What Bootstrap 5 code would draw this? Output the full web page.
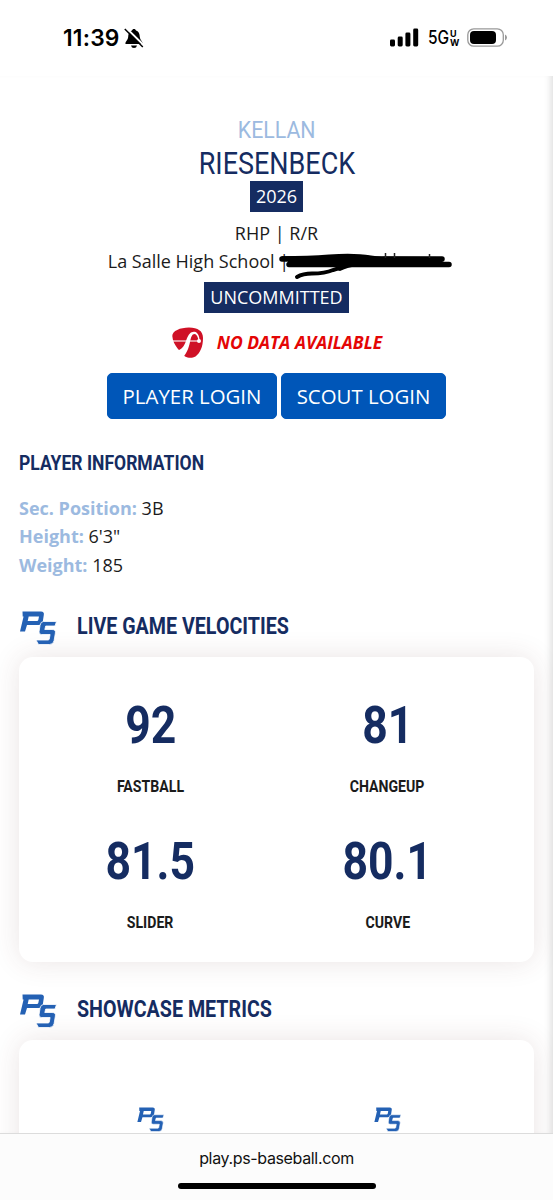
<!DOCTYPE html>
<html lang="en">
<head>
<meta charset="utf-8">
<meta name="viewport" content="width=device-width, initial-scale=1">
<title>Kellan Riesenbeck</title>
<link href="https://cdn.jsdelivr.net/npm/bootstrap@5.3.0/dist/css/bootstrap.min.css" rel="stylesheet">
<style>
  :root { --navy: #152c61; --sky: #9cbae0; }
  body { height: 1200px; overflow: hidden; background: #fff; color: #1b1b1b; font-family: "Open Sans", "Noto Sans", sans-serif; font-size: 18px; line-height: 28.4px; }
  .statusbar { height: 76px; font-family: Inter, sans-serif; color: #000; padding: 0 45px 0 63px; }
  .clock { font-size: 22.8px; font-weight: 600; line-height: 76px; letter-spacing: .2px; }
  .carrier { font-size: 18px; font-weight: 500; line-height: 20px; width: 22px; margin-left: 9px; }
  .carrier > span { display: inline-block; transform: scaleX(.86); transform-origin: 0 50%; }
  .uw { font-size: 9px; font-weight: 700; line-height: 9px; width: 10px; }
  .page { min-height: 0; padding: 38px 19px 0; box-shadow: inset -7px 0 7px -5px rgba(0,0,0,.14); }
  .cond { font-family: Roboto, sans-serif; white-space: nowrap; }
  .cond > span { display: inline-block; transform: scaleX(.87); }
  .cond.left > span { transform-origin: 0 50%; transform: scaleX(.848); }
  .cond.info > span { transform: scaleX(.835); }
  .first { font-size: 24.5px; line-height: 30px; color: var(--sky); padding-top: .5px; }
  .last { font-size: 31px; line-height: 36px; color: var(--navy); padding-top: 1.500px; margin-bottom: -1.500px; }
  .tag { background: var(--navy); color: #fff; line-height: 31px; padding: 0 6px; }
  .scribble { width: 180px; height: 36px; overflow: visible; position: absolute; left: -5px; top: 0; }
  .hiddenpart { width: 166px; position: relative; text-align: left; }
  .nodata { color: #e40505; font-size: 17.5px; font-weight: 700; font-style: italic; height: 34px; margin: 12px 0 14px; padding-left: 1px; }
  .btn-login { --bs-btn-bg: #0056b8; --bs-btn-color: #fff; --bs-btn-border-color: #0056b8; font-size: 20.4px; line-height: 30px; height: 46px; padding: 7px 0; border-radius: 5px; }
  .heading { color: var(--navy); font-weight: 700; }
  .info { font-size: 21px; line-height: 28px; margin: 30px 0 17px; }
  .title { height: 36px; margin: 31px 0 11px; }
  .title .heading { font-size: 23.200px; line-height: 30px; margin: 0 0 4px 20px; }
  .lbl { color: var(--sky); font-weight: 700; }
  .panel { border-radius: 14px; background: #fff; box-shadow: 0 0 28px rgba(90,45,45,.13); padding: 39px 28px 0 13px; }
  .velocities { height: 305px; }
  .metrics { height: 200px; padding-top: 67px; }
  .num { font-size: 52px; font-weight: 700; line-height: 60px; color: var(--navy); margin-bottom: 19px; }
  .num > span { transform: scaleX(.855); }
  .cap { font-size: 17px; font-weight: 700; line-height: 22px; margin-bottom: 35px; }
  .cap > span { transform: scaleX(.83); }
  .addressbar { height: 67px; flex: none; background: #fcfcfc; border-top: 1px solid #dcdcdc; font-family: Inter, sans-serif; font-size: 16px; letter-spacing: -.35px; color: #111; z-index: 2; padding-top: 12px; line-height: 24px; }
  .homebar { width: 198px; height: 6px; border-radius: 3px; background: #000; margin: 13px auto 0; }
</style>
<script src="https://cdn.jsdelivr.net/npm/bootstrap@5.3.0/dist/js/bootstrap.bundle.min.js"></script>
</head>
<body class="d-flex flex-column">
<svg width="0" height="0" class="position-absolute"><symbol id="ps" viewBox="0 0 37 34">
  <path fill="#2461b4" d="M3 .5H21.500Q25 .5 24.300 4L23.300 10.500Q22.500 14 19 14H7.500L5.500 20.500H.5L4.200 5H9.300L8.200 10H17.500Q18.600 10 18.800 9L19.500 5.500H3.200Z"/>
  <path fill="#2461b4" stroke="#fff" stroke-width=".8" d="M24 10.500H37L35.500 15H26.200L25.300 18.500H32.500Q36.500 18.500 35.900 22L34.600 29.500Q34 33.500 30 33.500H19L16.500 29H28.500Q29.600 29 29.800 28L30.600 23.500H22Q19 23.500 19.600 20.500L20.500 14.500Q21 10.500 24 10.500Z"/>
</symbol></svg>
<header class="statusbar d-flex align-items-center justify-content-between flex-shrink-0">
  <div class="d-flex align-items-center gap-1"><span class="clock">11:39</span>
    <svg width="20" height="21" viewBox="0 0 20 21"><path d="M10 1C9 1 8.200 1.600 8 2.500C5 3.500 4.400 6 4.200 9C4 12 1.500 13.500 1.300 15.300Q1.300 16 2 16H18Q18.700 16 18.700 15.300C18.500 13.500 16 12 15.800 9C15.600 6 15 3.500 12 2.500C11.800 1.600 11 1 10 1Z"/><path d="M7 17.500H13Q12.500 20 10 20Q7.500 20 7 17.500Z"/><path d="M2-.2L20.500 18" stroke="#fff" stroke-width="2"/><path d="M.8 1L18.800 19" stroke="#000" stroke-width="1.500"/></svg>
  </div>
  <div class="d-flex align-items-center" style="margin-bottom:1px">
    <svg width="29" height="19" viewBox="0 0 29 19"><rect x="0" y="11.500" width="5" height="7" rx="1.400"/><rect x="7.700" y="8.500" width="5" height="10" rx="1.400"/><rect x="15.400" y="4.500" width="5" height="14" rx="1.400"/><rect x="23.200" y=".5" width="5" height="18" rx="1.400"/></svg>
    <span class="carrier"><span>5G</span></span><span class="uw d-flex flex-column"><span>U</span><span>W</span></span>
    <svg style="margin-left:7px" width="41" height="19" viewBox="0 0 41 19"><rect x=".8" y=".8" width="35.500" height="17.400" rx="6" fill="none" stroke="#999" stroke-width="1.300"/><rect x="3" y="3" width="26" height="13" rx="4"/><path d="M38 6.500Q40 7.500 40 9.500Q40 11.500 38 12.500Z" fill="#999"/></svg>
  </div>
</header>
<main class="page flex-grow-1 overflow-hidden">
  <section class="d-flex flex-column align-items-center text-center">
    <div class="cond first"><span>KELLAN</span></div>
    <div class="cond last"><span>RIESENBECK</span></div>
    <div class="tag">2026</div>
    <div style="margin-top:7.500px">RHP | R/R</div>
    <div class="d-flex"><span>La Salle High School&nbsp;</span><span class="hiddenpart">|
      <svg class="scribble" viewBox="0 0 180 36"><path d="M8 12H168M15 17.500H175" stroke="#000" stroke-width="5.500" stroke-linecap="round"/><path d="M7 9.300Q35 9 55 7.500Q80 5.500 97 8.500Q105 10 111 9.500L165 10V19L111 20L77 19.500H14V14Z"/><path d="M23 30Q29 26.500 38 26.500Q51 26.500 59 23L77 17" fill="none" stroke="#000" stroke-width="4" stroke-linecap="round"/><path d="M60 22L77 16L84 19Q74 20 66 24Z"/><path d="M111.500 6V11M120.500 6V11M155.500 7V11" stroke="#222" stroke-width="1.500"/></svg></span></div>
    <div class="tag" style="margin-top:6px">UNCOMMITTED</div>
    <div class="nodata d-flex align-items-center">
      <svg width="32" height="31" viewBox="0 0 32 31" style="margin:2px 13px 0 0"><path fill="#cf1126" d="M.3 9C.3 4 8 .5 17 .5C26 .5 31 4 31 11C31 20 28 26 23.500 29.500C20 31.500 16 31 13 29.500C9 24.500 1 19 .3 9Z"/><path d="M1 14H27" stroke="#fff" stroke-width="1.100"/><path fill="#fff" d="M5.500 24C11.500 21 12.500 18 14.500 12.500C16.500 7 19 4.300 22.500 4.700C26 5.300 27.300 9 27.800 14L26.600 14C26 10 24.500 7 22.500 7C20 7 19 10 18 15C16.500 22 14.500 26.500 11 30Q7 28 5.500 24Z"/><circle cx="27" cy="14" r="2" fill="#fff"/></svg>
      <span>NO DATA AVAILABLE</span></div>
    <div class="d-flex" style="gap:4px"><a class="btn btn-login" style="width:170px">PLAYER LOGIN</a><a class="btn btn-login" style="width:165px">SCOUT LOGIN</a></div>
  </section>
  <h2 class="cond left heading info"><span>PLAYER INFORMATION</span></h2>
  <div><span class="lbl">Sec. Position:</span> 3B</div>
  <div><span class="lbl">Height:</span> 6'3"</div>
  <div><span class="lbl">Weight:</span> 185</div>
  <div class="title d-flex align-items-center"><svg width="38" height="34"><use href="#ps"/></svg><h2 class="cond left heading"><span>LIVE GAME VELOCITIES</span></h2></div>
  <section class="panel velocities"><div class="row g-0 text-center">
    <div class="col-6"><div class="cond num"><span>92</span></div><div class="cond cap"><span>FASTBALL</span></div></div>
    <div class="col-6"><div class="cond num"><span>81</span></div><div class="cond cap"><span>CHANGEUP</span></div></div>
    <div class="col-6"><div class="cond num"><span>81.5</span></div><div class="cond cap"><span>SLIDER</span></div></div>
    <div class="col-6"><div class="cond num"><span>80.1</span></div><div class="cond cap"><span>CURVE</span></div></div>
  </div></section>
  <div class="title d-flex align-items-center"><svg width="38" height="34"><use href="#ps"/></svg><h2 class="cond left heading"><span>SHOWCASE METRICS</span></h2></div>
  <section class="panel metrics"><div class="row g-0 text-center"><div class="col-6"><svg class="d-block mx-auto" width="27" height="25"><use href="#ps"/></svg></div><div class="col-6"><svg class="d-block mx-auto" width="27" height="25"><use href="#ps"/></svg></div></div></section>
</main>
<footer class="addressbar text-center">play.ps-baseball.com<div class="homebar"></div></footer>
</body>
</html>
